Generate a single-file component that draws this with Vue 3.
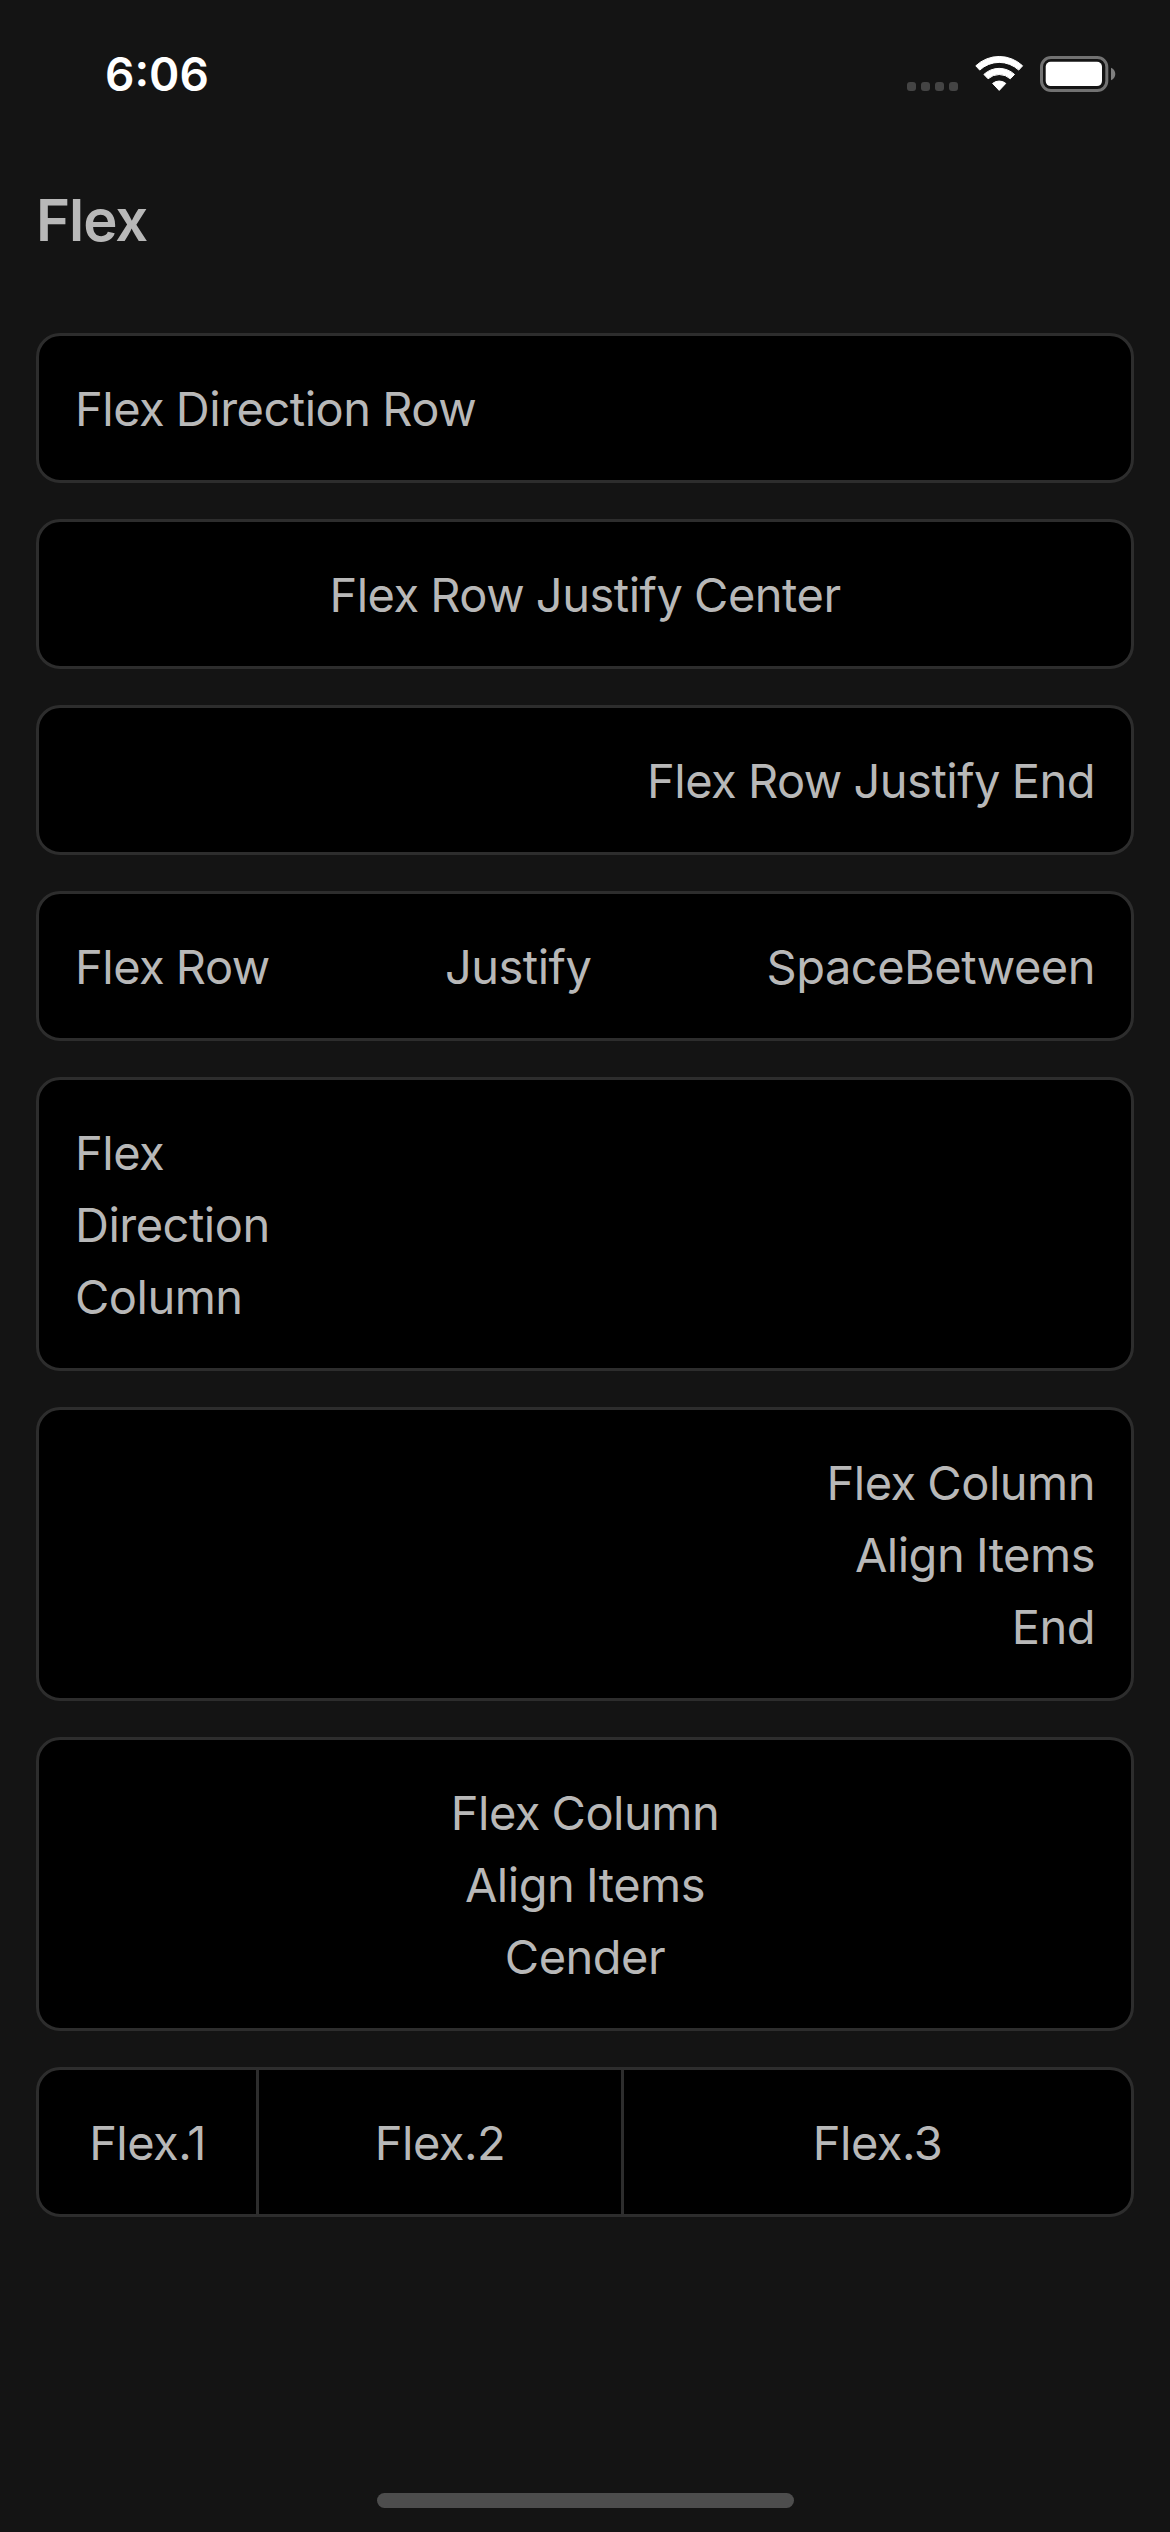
<script setup>
const cards = [
  { layout: 'row', items: ['Flex Direction Row'] },
  { layout: 'row justify-center', items: ['Flex Row Justify Center'] },
  { layout: 'row justify-end', items: ['Flex Row Justify End'] },
  { layout: 'row justify-between', items: ['Flex Row', 'Justify', 'SpaceBetween'] },
  { layout: 'column', items: ['Flex', 'Direction', 'Column'] },
  { layout: 'column align-end', items: ['Flex Column', 'Align Items', 'End'] },
  { layout: 'column align-center', items: ['Flex Column', 'Align Items', 'Cender'] },
]
const cells = [1, 2, 3]
</script>

<template>
  <div class="screen">
    <header class="status">
      <span class="time">6:06</span>
      <div class="indicators">
        <div class="dots"><i v-for="n in 4" :key="n" class="dot"></i></div>
        <svg class="wifi" width="49" height="37" viewBox="0 0 49 37" fill="#fff" stroke="#fff" stroke-width="1" stroke-linejoin="round">
          <path d="M.8 10.8A34 34 0 0 1 47.6 10.8L43.7 15.1A28.5 28.5 0 0 0 4.7 15.1Z" />
          <path d="M8.9 19.4A22.4 22.4 0 0 1 39.5 19.4L35.3 23.8A16.5 16.5 0 0 0 13.1 23.8Z" />
          <path d="M17.6 28.4A10.4 10.4 0 0 1 30.8 28.4L24.2 35.4Z" />
        </svg>
        <svg class="battery" width="76" height="37" viewBox="0 0 76 37">
          <rect x="1.5" y="2.5" width="65.3" height="33" rx="9.5" fill="none" stroke="#727272" stroke-width="3" />
          <rect x="5.7" y="6.8" width="56.3" height="24.3" rx="5" fill="#fff" />
          <path d="M71 12.8c2.700 1 4.300 3.400 4.300 6.200s-1.600 5.200-4.300 6.200z" fill="#7e7e7e" />
        </svg>
      </div>
    </header>

    <h1 class="title">Flex</h1>

    <main class="list">
      <section v-for="(card, i) in cards" :key="i" class="card" :class="card.layout">
        <span v-for="item in card.items" :key="item" class="text">{{ item }}</span>
      </section>
      <section class="card cells">
        <div v-for="n in cells" :key="n" class="cell" :class="`flex-${n}`">
          <span class="text">Flex.{{ n }}</span>
        </div>
      </section>
    </main>

    <footer class="home"><div class="home-bar"></div></footer>
  </div>
</template>

<style>
body {
  margin: 0;
  background: #141414;
}
</style>

<style scoped>
.screen {
  box-sizing: border-box;
  width: 1170px;
  height: 2532px;
  display: flex;
  flex-direction: column;
  overflow: hidden;
  background: #141414;
  color: #b8b8b8;
  font-family: Inter, "Liberation Sans", sans-serif;
}
.status {
  box-sizing: border-box;
  height: 141px;
  padding: 55px 54px 0 105px;
  display: flex;
  justify-content: space-between;
  align-items: flex-start;
  color: #fff;
}
.time {
  font-size: 46px;
  line-height: 38px;
  font-weight: 600;
}
.indicators {
  display: flex;
  align-items: flex-end;
  height: 37px;
}
.dots {
  display: flex;
  gap: 5px;
  margin: 0 17px 1px 0;
}
.dot {
  width: 9px;
  height: 9px;
  border-radius: 3px;
  background: #444;
}
.wifi {
  margin-right: 16px;
}
.wifi,
.battery {
  display: block;
}
.title {
  margin: 0;
  height: 192px;
  padding-left: 36px;
  font-size: 58px;
  line-height: 158px;
  font-weight: 600;
  letter-spacing: -1px;
}
.list {
  flex: 1;
  padding: 0 36px;
  display: flex;
  flex-direction: column;
  gap: 36px;
}
.card {
  padding: 37px 36px 35px;
  display: flex;
  border: 3px solid #2d2d2d;
  border-radius: 24px;
  background: #000;
}
.column {
  flex-direction: column;
}
.justify-center {
  justify-content: center;
}
.justify-end {
  justify-content: flex-end;
}
.justify-between {
  justify-content: space-between;
}
.align-end {
  align-items: flex-end;
}
.align-center {
  align-items: center;
}
.text {
  font-size: 47px;
  line-height: 72px;
  letter-spacing: -0.5px;
  word-spacing: -1px;
  white-space: nowrap;
}
.cells {
  padding: 0;
}
.cell {
  min-width: 0;
  padding: 37px 36px 35px;
  display: flex;
  justify-content: center;
  border-right: 3px solid #2d2d2d;
}
.cell:last-child {
  border-right: 0;
}
.flex-1 {
  flex: 1 1 0;
}
.flex-2 {
  flex: 2 1 0;
}
.flex-3 {
  flex: 3 1 0;
}
.home {
  display: flex;
  justify-content: center;
  padding-bottom: 24px;
}
.home-bar {
  width: 417px;
  height: 15px;
  border-radius: 8px;
  background: #4d4d4d;
}
</style>
